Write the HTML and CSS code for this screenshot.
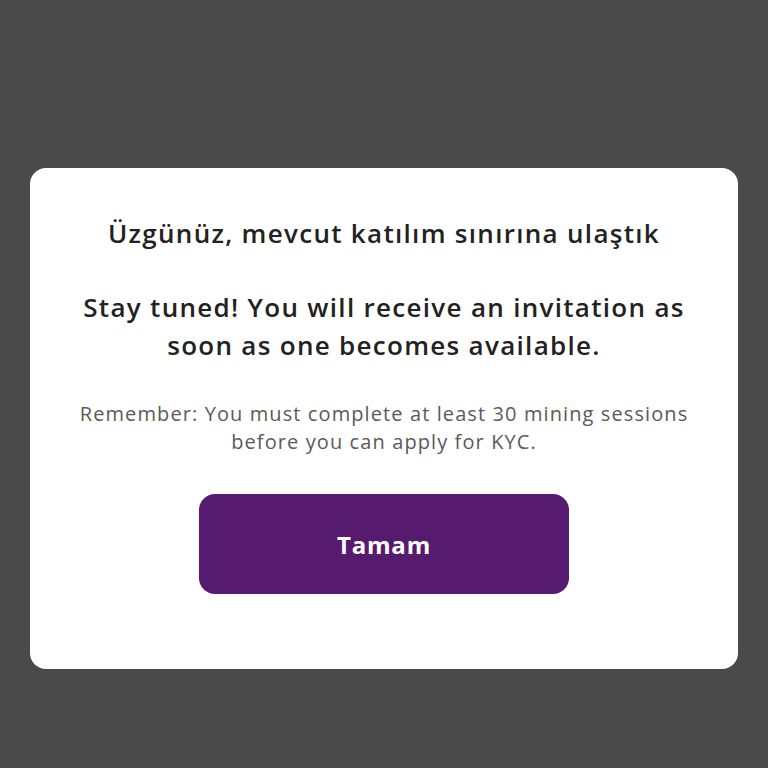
FILE: index.html
```html
<!DOCTYPE html>
<html lang="tr">
<head>
<meta charset="utf-8">
<link rel="stylesheet" href="styles.css">
</head>
<body>
<div class="overlay">
  <div class="card">
    <h1 class="title">Üzgünüz, mevcut katılım sınırına ulaştık</h1>
    <h2 class="subtitle">Stay tuned! You will receive an invitation as<br>soon as one becomes available.</h2>
    <p class="note">Remember: You must complete at least 30 mining sessions<br>before you can apply for KYC.</p>
    <button class="btn">Tamam</button>
  </div>
</div>
</body>
</html>
```
FILE: styles.css
```css
html, body {
  margin: 0;
  padding: 0;
  background: #4a4a4a;
}
.overlay {
  width: 768px;
  height: 768px;
  box-sizing: border-box;
  padding: 168px 30px 0 30px;
}
.card {
  background: #ffffff;
  border-radius: 16px;
  height: 501px;
  box-sizing: border-box;
  padding: 46px 10px 0 10px;
  display: flex;
  flex-direction: column;
  align-items: center;
  font-family: "Open Sans", "Noto Sans", sans-serif;
  color: #222222;
  text-align: center;
}
.title {
  margin: 0;
  font-size: 26px;
  font-weight: 600;
  line-height: 38px;
  letter-spacing: 1.3px;
  white-space: nowrap;
}
.subtitle {
  margin: 36px 0 0 0;
  font-size: 26px;
  font-weight: 600;
  line-height: 38px;
  letter-spacing: 1.3px;
  white-space: nowrap;
}
.note {
  margin: 36px 0 0 0;
  font-size: 20px;
  line-height: 28px;
  letter-spacing: 1.1px;
  color: #5a5a5a;
  white-space: nowrap;
}
.btn {
  margin-top: 38px;
  width: 370px;
  height: 100px;
  border: none;
  border-radius: 16px;
  background: #561a6e;
  color: #ffffff;
  font-family: "Open Sans", "Noto Sans", sans-serif;
  font-size: 24px;
  font-weight: 700;
  letter-spacing: 0.8px;
}
```
